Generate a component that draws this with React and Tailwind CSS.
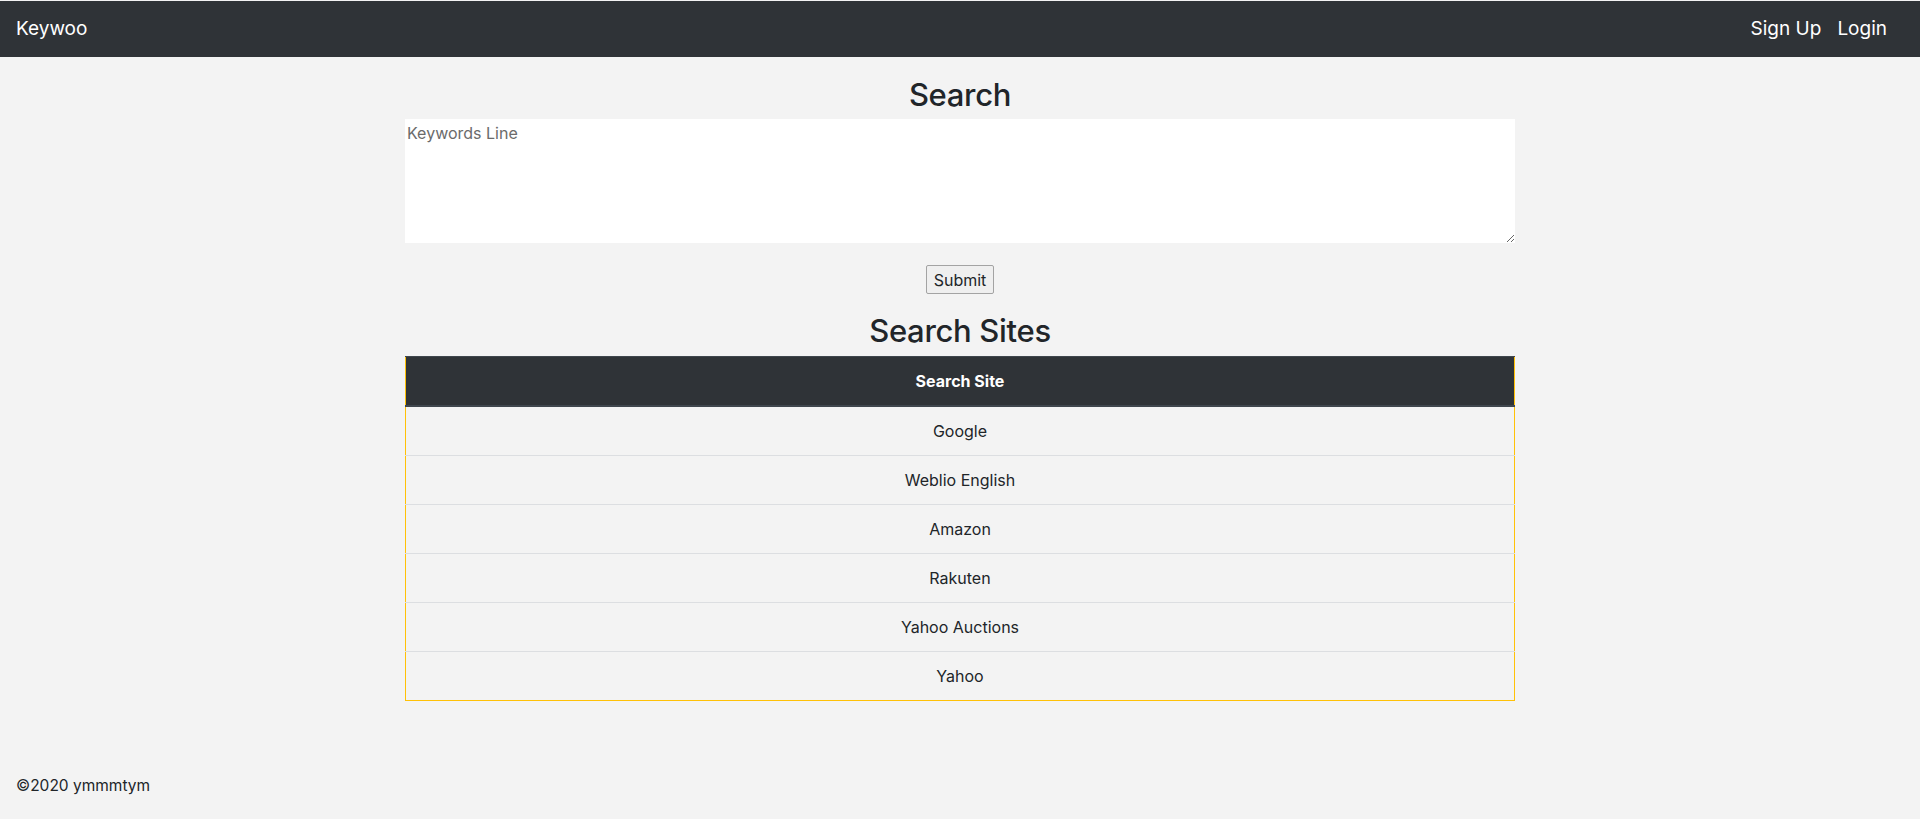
export default function App() {
  const sites = ['Google', 'Weblio English', 'Amazon', 'Rakuten', 'Yahoo Auctions', 'Yahoo']

  return (
    <div className="min-h-screen bg-[#f3f3f3] pt-px font-['Inter',sans-serif] text-[16px] text-[#212529]">
      <nav className="flex h-[56px] items-center justify-between bg-[#2f3337] pl-4 pr-[25px] text-white">
        <a href="#" className="text-[19px] leading-[30px]">Keywoo</a>
        <div className="flex items-center text-[19px]">
          <a href="#" className="px-2">Sign Up</a>
          <a href="#" className="px-2">Login</a>
        </div>
      </nav>

      <main className="mx-auto w-[1110px]">
        <h1 className="mt-[19px] text-center text-[31px] font-medium leading-[38px] tracking-[-0.01em]">Search</h1>
        <textarea
          placeholder="Keywords Line"
          className="mt-[5px] block h-[124px] w-full bg-white px-[2px] pt-[4px] text-[16px] leading-[20px] outline-none placeholder:text-[#6b6b6b]"
        />
        <div className="mt-[22px] flex justify-center">
          <button className="h-[29px] w-[68px] rounded-[2px] border border-[#a3a3a3] bg-[#efefef] text-[16px] leading-none">
            Submit
          </button>
        </div>
        <h1 className="mt-[18px] text-center text-[31px] font-medium leading-[38px] tracking-[-0.01em]">Search Sites</h1>
        <table className="mt-[6px] w-full border-collapse border border-[#ffc107] text-center">
          <thead>
            <tr>
              <th className="border-t border-b-2 border-[#3f464d] bg-[#2f3337] py-3 font-bold leading-6 text-white">
                Search Site
              </th>
            </tr>
          </thead>
          <tbody>
            {sites.map((s) => (
              <tr key={s}>
                <td className="border-t border-[#dcdee1] py-3 leading-6">{s}</td>
              </tr>
            ))}
          </tbody>
        </table>
      </main>

      <footer className="mt-[73px] px-4 text-[15.5px] leading-6">©2020 ymmmtym</footer>
    </div>
  )
}
